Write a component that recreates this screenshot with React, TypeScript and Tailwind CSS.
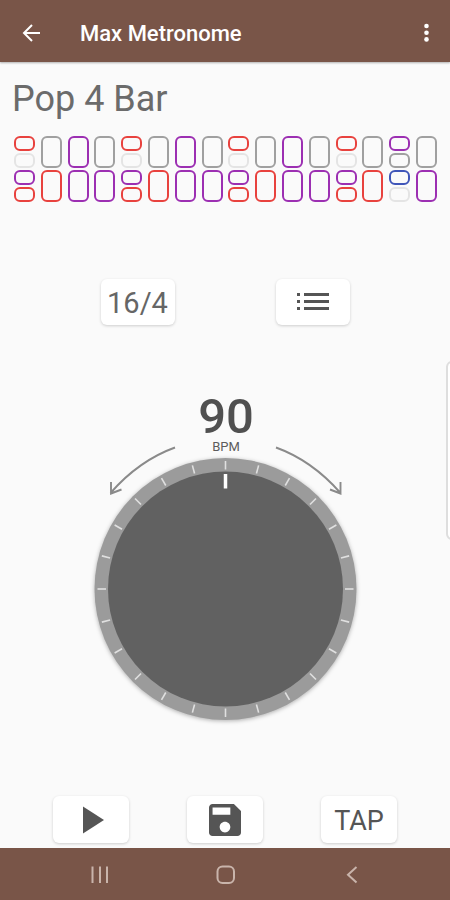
import { useState } from 'react';
import { clsx } from 'clsx';

type Tone = 'red' | 'gray' | 'purple' | 'blue' | 'off';

const toneClasses: Record<Tone, string> = {
  red: 'border-[#e8423e]',
  gray: 'border-[#a0a0a0]',
  purple: 'border-[#9c2fb2]',
  blue: 'border-[#3f55b8]',
  off: 'border-[#e4e4e4]',
};

// Each beat has an upper and a lower voice, a voice with two tones is split
const beats: { upper: Tone[]; lower: Tone[] }[] = [
  { upper: ['red', 'off'], lower: ['purple', 'red'] },
  { upper: ['gray'], lower: ['red'] },
  { upper: ['purple'], lower: ['purple'] },
  { upper: ['gray'], lower: ['purple'] },
  { upper: ['red', 'off'], lower: ['purple', 'red'] },
  { upper: ['gray'], lower: ['red'] },
  { upper: ['purple'], lower: ['purple'] },
  { upper: ['gray'], lower: ['purple'] },
  { upper: ['red', 'off'], lower: ['purple', 'red'] },
  { upper: ['gray'], lower: ['red'] },
  { upper: ['purple'], lower: ['purple'] },
  { upper: ['gray'], lower: ['purple'] },
  { upper: ['red', 'off'], lower: ['purple', 'red'] },
  { upper: ['gray'], lower: ['red'] },
  { upper: ['purple', 'gray'], lower: ['blue', 'off'] },
  { upper: ['gray'], lower: ['purple'] },
];

const ticks = Array.from({ length: 24 }, (_, i) => i * 15);

const cardButton =
  'flex items-center justify-center rounded-md bg-white text-[#555] shadow-[0_1px_3px_rgba(0,0,0,0.18)]';

function Voice({ tones }: { tones: Tone[] }) {
  return (
    <div className="flex h-8 flex-col gap-[2px]">
      {tones.map((tone, i) => (
        <span key={i} className={clsx('flex-1 rounded-md border-2', toneClasses[tone])} />
      ))}
    </div>
  );
}

function Dial({ bpm, onChange }: { bpm: number; onChange: (bpm: number) => void }) {
  return (
    <div className="relative">
      <svg viewBox="0 0 264 264" className="block h-[264px] w-[264px] drop-shadow-[0_1px_2px_rgba(0,0,0,0.3)]" aria-hidden="true">
        <circle cx="132.500" cy="132" r="131" fill="#9b9b9b" />
        <circle cx="132.500" cy="132" r="117.500" fill="#616161" />
        {ticks.map((angle) => (
          <path key={angle} d="M132.500 4v8.500" stroke="#e0e0e0" strokeWidth="1.600" transform={`rotate(${angle} 132.500 132)`} />
        ))}
        <path d="M132.500 17v14.500" stroke="#fff" strokeWidth="3.500" transform={`rotate(${bpm - 90} 132.500 132)`} />
      </svg>
      {/* Turn direction arrows */}
      <svg
        viewBox="0 0 240 52"
        className="absolute -top-3 left-1/2 h-[52px] w-[240px] -translate-x-1/2"
        fill="none"
        stroke="#8a8a8a"
        strokeWidth="1.900"
        aria-hidden="true"
      >
        <path d="M70 2.500Q34 15.500 5.500 48M6 37V48.500L16.500 44.500" />
        <path d="M171 2.500Q207 15.500 235.500 48M235.500 37V48.500L225 44.500" />
      </svg>
      <input
        type="range"
        min={20}
        max={300}
        value={bpm}
        onChange={(e) => onChange(Number(e.target.value))}
        aria-label="Tempo"
        className="absolute inset-0 h-full w-full cursor-pointer opacity-0"
      />
    </div>
  );
}

export default function App() {
  const [bpm, setBpm] = useState(90);

  return (
    <div className="relative flex min-h-screen flex-col overflow-hidden bg-[#fafafa] font-['Roboto',sans-serif]">
      <header className="flex h-[62px] items-center bg-[#795548] pt-1 pr-3 pl-5 text-white shadow-[0_1px_2px_rgba(0,0,0,0.3)]">
        <button aria-label="Back">
          <svg viewBox="0 0 24 24" className="h-6 w-6" fill="none" stroke="currentColor" strokeWidth="2" aria-hidden="true">
            <path d="M20 12H4.500M12 4L4 12L12 20" />
          </svg>
        </button>
        <h1 className="ml-9 flex-1 pt-[2px] text-[22px] leading-7 font-medium">Max Metronome</h1>
        <button aria-label="More options">
          <svg viewBox="0 0 24 24" className="h-6 w-6" fill="currentColor" aria-hidden="true">
            <circle cx="12.500" cy="5" r="2.300" />
            <circle cx="12.500" cy="11.700" r="2.300" />
            <circle cx="12.500" cy="18.400" r="2.300" />
          </svg>
        </button>
      </header>

      <main className="flex flex-1 flex-col">
        <h2 className="mt-[17px] ml-3 text-[36px] leading-10 text-[#6b6b6b]">Pop 4 Bar</h2>

        <div className="mt-[17px] flex justify-between pr-[13px] pl-[14px]">
          {beats.map((beat, i) => (
            <div key={i} className="flex w-[21px] flex-col gap-[2px]">
              <Voice tones={beat.upper} />
              <Voice tones={beat.lower} />
            </div>
          ))}
        </div>

        <div className="mt-[77px] flex justify-center gap-[101px]">
          <button className={clsx(cardButton, 'h-[46px] w-[74px] pt-[3px] text-[29px] text-[#666]')}>16/4</button>
          <button className={clsx(cardButton, 'h-[46px] w-[74px]')} aria-label="Presets">
            <svg viewBox="0 0 32 20" className="h-5 w-8" fill="currentColor" aria-hidden="true">
              <path d="M0 1h3v3H0zM0 8h3v3H0zM0 15h3v3H0zM7 1h25v3H7zM7 8h25v3H7zM7 15h25v3H7z" />
            </svg>
          </button>
        </div>

        <div className="mt-[68px] flex flex-col items-center">
          <output className="pl-[2px] text-[49px] leading-[48px] font-medium text-[#505050]">{bpm}</output>
          <span className="pl-[2px] text-[13px] leading-3 text-[#5c5c5c]">BPM</span>
          <div className="mt-1">
            <Dial bpm={bpm} onChange={setBpm} />
          </div>
        </div>

        <div className="mt-auto mb-[5px] flex justify-center gap-[58px] pt-4">
          <button className={clsx(cardButton, 'h-[47px] w-[76px]')} aria-label="Play">
            <svg viewBox="0 0 26 28" className="h-7 w-[26px]" fill="currentColor" aria-hidden="true">
              <path d="M5 0.500L26 14L5 27.500z" />
            </svg>
          </button>
          <button className={clsx(cardButton, 'h-[47px] w-[76px]')} aria-label="Save">
            <svg viewBox="3 3 18 18" className="h-8 w-8" fill="currentColor" aria-hidden="true">
              <path d="M17 3H5c-1.110 0-2 .9-2 2v14c0 1.100.890 2 2 2h14c1.100 0 2-.9 2-2V7l-4-4zm-5 16c-1.660 0-3-1.340-3-3s1.340-3 3-3 3 1.340 3 3-1.340 3-3 3zm3-10H5V5h10v4z" />
            </svg>
          </button>
          <button className={clsx(cardButton, 'h-[47px] w-[76px] pt-[3px] text-[27px]')}>TAP</button>
        </div>
      </main>

      <nav className="flex h-[52px] items-center justify-center gap-[102px] bg-[#795548] text-[#c9b4ab]">
        <button aria-label="Recent apps">
          <svg viewBox="0 0 24 24" className="h-6 w-6" fill="none" stroke="currentColor" strokeWidth="2" aria-hidden="true">
            <path d="M5.500 4.500v16.500M13 4.500v16.500M20 4.500v16.500" />
          </svg>
        </button>
        <button aria-label="Home">
          <svg viewBox="0 0 24 24" className="h-6 w-6" fill="none" stroke="currentColor" strokeWidth="2" aria-hidden="true">
            <rect x="4.500" y="4.500" width="16.500" height="16.500" rx="5" />
          </svg>
        </button>
        <button aria-label="Back to previous screen">
          <svg viewBox="0 0 24 24" className="h-6 w-6" fill="none" stroke="currentColor" strokeWidth="2" aria-hidden="true">
            <path d="M17.500 5L9 12.700L17.500 20.500" />
          </svg>
        </button>
      </nav>

      {/* Edge panel handle */}
      <div className="absolute top-[361px] -right-1 h-[179px] w-2 rounded-l-md border-2 border-[#dedede] bg-white" />
    </div>
  );
}
